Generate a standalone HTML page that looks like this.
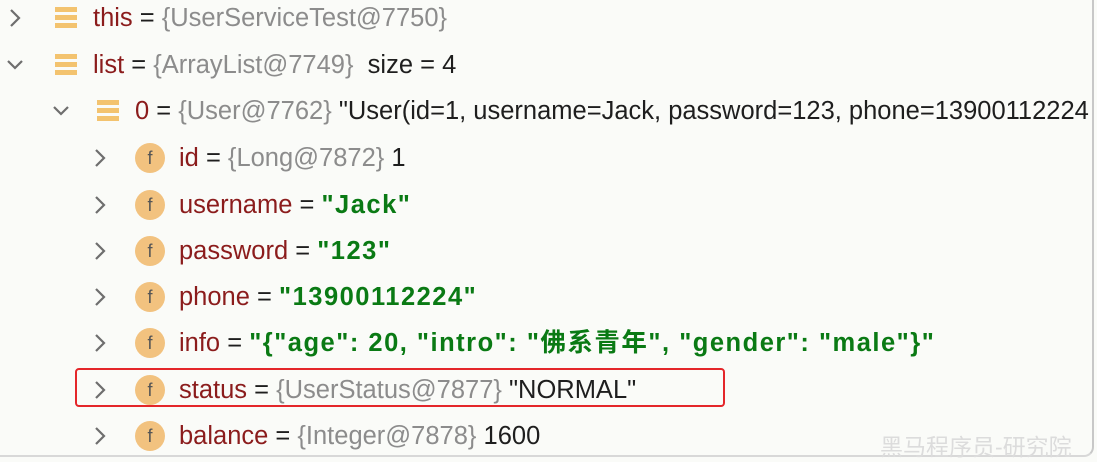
<!DOCTYPE html>
<html><head><meta charset="utf-8"><style>
body{margin:0;width:1097px;height:458px;background:#fafbf8;overflow:hidden;position:relative;font-family:"Liberation Sans","Noto Sans CJK SC",sans-serif;font-size:25.5px;color:#1e1e1e}
.frame{position:absolute;left:0;top:0;width:1092px;height:455px;border-right:2px solid #c8c8c8;border-bottom:2px solid #d8d8d8;border-radius:0 0 10px 0}
.row{position:absolute;height:46px;line-height:46px;white-space:nowrap;left:0;right:5px;overflow:hidden}
.n{color:#8b1c1c}.g{color:#8c8c8c}.s{color:#0a7a14;font-weight:bold;letter-spacing:1.5px}
.chev{position:absolute;top:0;width:24px;height:46px}
.lst{position:absolute;top:12px;width:22px;height:22px}
.lst i{display:block;height:5px;background:#f3c36f;margin-bottom:3px}
.f{position:absolute;top:8px;width:30px;height:30px;border-radius:50%;background:#f2c27f;color:#555;font-size:18px;line-height:30px;text-align:center}
.t{position:absolute;top:0}
.box{position:absolute;left:75px;top:368px;width:646px;height:35px;border:2px solid #e4262a;border-radius:4px}
.wm{position:absolute;left:880px;top:428px;font-size:23px;color:#dcdcdc}
</style></head><body>
<div class="frame"></div>
<svg width="0" height="0" style="position:absolute"><defs>
<symbol id="r" viewBox="0 0 24 46"><path d="M8 15 L16 23 L8 31" fill="none" stroke="#6e6e6e" stroke-width="2.2"/></symbol>
<symbol id="d" viewBox="0 0 24 46"><path d="M5 19 L12 26 L19 19" fill="none" stroke="#6e6e6e" stroke-width="2.2"/></symbol>
</defs></svg>

<div class="row" style="top:-5px"><svg class="chev" style="left:3px"><use href="#r"/></svg><div class="lst" style="left:55px"><i></i><i></i><i></i></div><span class="t" style="left:93px"><span class="n">this</span> = <span class="g">{UserServiceTest@7750}</span></span></div>
<div class="row" style="top:42px"><svg class="chev" style="left:3px"><use href="#d"/></svg><div class="lst" style="left:55px"><i></i><i></i><i></i></div><span class="t" style="left:93px"><span class="n">list</span> = <span class="g">{ArrayList@7749}</span>&nbsp; size = 4</span></div>
<div class="row" style="top:88px"><svg class="chev" style="left:49px"><use href="#d"/></svg><div class="lst" style="left:97px"><i></i><i></i><i></i></div><span class="t" style="left:135px"><span class="n">0</span> = <span class="g">{User@7762}</span> "User(id=1, username=Jack, password=123, phone=13900112224</span></div>
<div class="row" style="top:135px"><svg class="chev" style="left:88px"><use href="#r"/></svg><div class="f" style="left:135px">f</div><span class="t" style="left:179px"><span class="n">id</span> = <span class="g">{Long@7872}</span> 1</span></div>
<div class="row" style="top:182px"><svg class="chev" style="left:88px"><use href="#r"/></svg><div class="f" style="left:135px">f</div><span class="t" style="left:179px"><span class="n">username</span> = <span class="s">"Jack"</span></span></div>
<div class="row" style="top:228px"><svg class="chev" style="left:88px"><use href="#r"/></svg><div class="f" style="left:135px">f</div><span class="t" style="left:179px"><span class="n">password</span> = <span class="s">"123"</span></span></div>
<div class="row" style="top:274px"><svg class="chev" style="left:88px"><use href="#r"/></svg><div class="f" style="left:135px">f</div><span class="t" style="left:179px"><span class="n">phone</span> = <span class="s">"13900112224"</span></span></div>
<div class="row" style="top:320px"><svg class="chev" style="left:88px"><use href="#r"/></svg><div class="f" style="left:135px">f</div><span class="t" style="left:179px"><span class="n">info</span> = <span class="s">"{"age": 20, "intro": "佛系青年", "gender": "male"}"</span></span></div>
<div class="row" style="top:367px"><svg class="chev" style="left:88px"><use href="#r"/></svg><div class="f" style="left:135px">f</div><span class="t" style="left:179px"><span class="n">status</span> = <span class="g">{UserStatus@7877}</span> "NORMAL"</span></div>
<div class="row" style="top:413px"><svg class="chev" style="left:88px"><use href="#r"/></svg><div class="f" style="left:135px">f</div><span class="t" style="left:179px"><span class="n">balance</span> = <span class="g">{Integer@7878}</span> 1600</span></div>
<div class="box"></div>
<div class="wm">黑马程序员-研究院</div>
</body></html>
